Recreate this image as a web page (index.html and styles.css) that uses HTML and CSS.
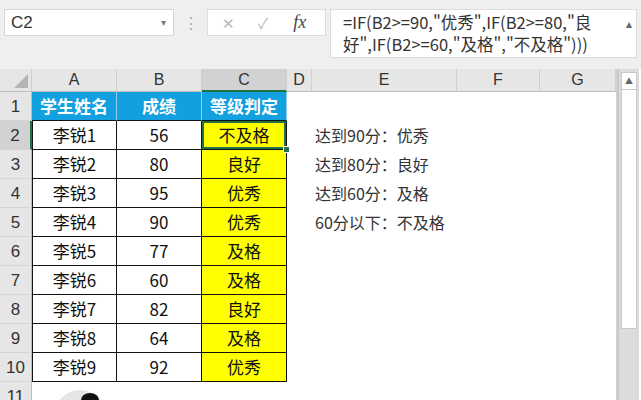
FILE: index.html
```html
<!DOCTYPE html>
<html lang="zh-CN">
<head>
<meta charset="UTF-8" />
<title>IF 函数 - 等级判定</title>
<link rel="stylesheet" href="styles.css">
</head>
<body>
<div class="toolbar">
  <div class="namebox">C2<span class="drop">▾</span></div>
  <div class="dots">⋮</div>
  <div class="fxgroup">
    <span class="btn-x">✕</span>
    <span class="btn-ok">✓</span>
    <span class="btn-fx">fx</span>
  </div>
  <div class="formula">
    =IF(B2&gt;=90,"优秀",IF(B2&gt;=80,"良<br>好",IF(B2&gt;=60,"及格","不及格")))
    <span class="collapse">▴</span>
  </div>
</div>

<div class="sheet">
  <div class="grid">
    <div class="corner"></div>
    <div class="colhead">A</div>
    <div class="colhead">B</div>
    <div class="colhead sel">C</div>
    <div class="colhead">D</div>
    <div class="colhead">E</div>
    <div class="colhead">F</div>
    <div class="colhead">G</div>

    <div class="rowhead">1</div>
    <div class="cell th first">学生姓名</div>
    <div class="cell th">成绩</div>
    <div class="cell th">等级判定</div>
    <div></div><div></div><div></div><div></div>

    <div class="rowhead sel">2</div>
    <div class="cell first">李锐1</div>
    <div class="cell">56</div>
    <div class="cell grade active">不及格</div>
    <div></div><div class="note">达到90分：优秀</div><div></div><div></div>

    <div class="rowhead">3</div>
    <div class="cell first">李锐2</div>
    <div class="cell">80</div>
    <div class="cell grade">良好</div>
    <div></div><div class="note">达到80分：良好</div><div></div><div></div>

    <div class="rowhead">4</div>
    <div class="cell first">李锐3</div>
    <div class="cell">95</div>
    <div class="cell grade">优秀</div>
    <div></div><div class="note">达到60分：及格</div><div></div><div></div>

    <div class="rowhead">5</div>
    <div class="cell first">李锐4</div>
    <div class="cell">90</div>
    <div class="cell grade">优秀</div>
    <div></div><div class="note">60分以下：不及格</div><div></div><div></div>

    <div class="rowhead">6</div>
    <div class="cell first">李锐5</div>
    <div class="cell">77</div>
    <div class="cell grade">及格</div>
    <div></div><div></div><div></div><div></div>

    <div class="rowhead">7</div>
    <div class="cell first">李锐6</div>
    <div class="cell">60</div>
    <div class="cell grade">及格</div>
    <div></div><div></div><div></div><div></div>

    <div class="rowhead">8</div>
    <div class="cell first">李锐7</div>
    <div class="cell">82</div>
    <div class="cell grade">良好</div>
    <div></div><div></div><div></div><div></div>

    <div class="rowhead">9</div>
    <div class="cell first">李锐8</div>
    <div class="cell">64</div>
    <div class="cell grade">及格</div>
    <div></div><div></div><div></div><div></div>

    <div class="rowhead">10</div>
    <div class="cell first">李锐9</div>
    <div class="cell">92</div>
    <div class="cell grade">优秀</div>
    <div></div><div></div><div></div><div></div>

    <div class="rowhead">11</div>
    <div class="pic">
      <svg width="60" height="40" viewBox="0 0 60 40">
        <circle cx="30" cy="30" r="26" fill="#e6e6e6"/>
        <ellipse cx="40" cy="14" rx="9" ry="7" fill="#111"/>
      </svg>
    </div>
    <div></div><div></div><div></div><div></div><div></div><div></div>
  </div>
  <div class="scrollbar">
    <div class="sb-up">▲</div>
    <div class="sb-thumb"></div>
  </div>
</div>
</body>
</html>
```

FILE: styles.css
```css
body {
  margin: 0;
  width: 641px;
  height: 400px;
  overflow: hidden;
  background: #efefef;
  font-family: "Noto Sans CJK SC", "Liberation Sans", sans-serif;
  color: #222;
}

.toolbar {
  display: flex;
  align-items: flex-start;
  height: 69px;
  padding: 9px 4px 0 4px;
  box-sizing: border-box;
}
.namebox {
  width: 170px;
  height: 27px;
  background: #fff;
  border: 1px solid #d6d6d6;
  box-sizing: border-box;
  font-family: "Liberation Sans", sans-serif;
  font-size: 17px;
  line-height: 25px;
  padding-left: 6px;
  color: #333;
  display: flex;
  justify-content: space-between;
}
.drop {
  font-size: 10px;
  color: #777;
  padding-right: 7px;
}
.dots {
  width: 33px;
  text-align: center;
  color: #aaa;
  font-size: 16px;
  line-height: 27px;
}
.fxgroup {
  width: 119px;
  height: 27px;
  background: #fff;
  border: 1px solid #dcdcdc;
  box-sizing: border-box;
  display: flex;
  align-items: center;
  color: #b8b8b8;
  font-size: 15px;
}
.btn-x { margin-left: 14px; }
.btn-ok { margin-left: 23px; }
.btn-fx {
  margin-left: 25px;
  font-family: "Liberation Serif", serif;
  font-style: italic;
  font-size: 18px;
  color: #444;
}
.formula {
  position: relative;
  margin-left: 4px;
  width: 307px;
  height: 49px;
  background: #fff;
  border: 1px solid #dcdcdc;
  box-sizing: border-box;
  padding: 1px 0 0 12px;
  font-size: 16.5px;
  line-height: 22px;
  color: #333;
}
.collapse {
  position: absolute;
  right: 4px;
  top: 2px;
  font-size: 12px;
  color: #666;
}

.sheet {
  display: flex;
  background: #fff;
}
.grid {
  display: grid;
  grid-template-columns: 32px 85px 85px 85px 25px 145px 83px 76px;
  grid-template-rows: 23px;
  grid-auto-rows: 29px;
  border-right: 2px solid #d0d0d0;
}
.corner {
  background: #e6e6e6;
  border-right: 1px solid #cfcfcf;
  border-bottom: 1px solid #bdbdbd;
  position: relative;
}
.corner::after {
  content: "";
  position: absolute;
  right: 3px;
  bottom: 3px;
  border-left: 14px solid transparent;
  border-bottom: 14px solid #b5b5b5;
}
.colhead {
  background: #e6e6e6;
  border-right: 1px solid #cfcfcf;
  border-bottom: 1px solid #bdbdbd;
  text-align: center;
  font-family: "Liberation Sans", sans-serif;
  font-size: 16px;
  line-height: 22px;
  color: #333;
}
.colhead.sel {
  background: #d2d2d2;
  border-bottom: 2px solid #217346;
}
.rowhead {
  background: #e6e6e6;
  border-right: 1px solid #bdbdbd;
  border-bottom: 1px solid #d4d4d4;
  text-align: center;
  font-family: "Liberation Sans", sans-serif;
  font-size: 17px;
  line-height: 29px;
  color: #333;
}
.rowhead.sel {
  background: #d2d2d2;
  border-right: 2px solid #217346;
}

.cell {
  border-right: 1px solid #111;
  border-bottom: 1px solid #111;
  text-align: center;
  font-size: 17px;
  line-height: 28px;
  color: #111;
}
.cell.first {
  border-left: 1px solid #111;
}
.cell.th {
  background: #12a0e0;
  color: #fff;
  font-weight: bold;
  border-right: 1px solid #8fcdf0;
  border-bottom: 1px solid #111;
}
.cell.th.first {
  border-left: none;
}
.cell.grade {
  background: #ffff00;
}
.cell.active {
  position: relative;
  box-shadow: inset 0 0 0 2px #217346;
}
.cell.active::after {
  content: "";
  position: absolute;
  right: -4px;
  bottom: -4px;
  width: 5px;
  height: 5px;
  background: #217346;
  border: 1px solid #fff;
}
.note {
  font-size: 16px;
  line-height: 29px;
  padding-left: 3px;
  color: #333;
  white-space: nowrap;
}
.pic {
  padding: 4px 0 0 18px;
  grid-column: span 2;
  overflow: hidden;
}

.scrollbar {
  width: 21px;
  height: 331px;
  background: #dcdcdc;
  border-left: 1px solid #c4c4c4;
  padding: 3px 2px 0 2px;
  box-sizing: border-box;
  display: flex;
  flex-direction: column;
}
.sb-up {
  height: 16px;
  background: #fff;
  border: 1px solid #c8c8c8;
  font-size: 8px;
  line-height: 15px;
  text-align: center;
  color: #666;
}
.sb-thumb {
  height: 238px;
  background: #fff;
  border: 1px solid #c8c8c8;
  border-top: none;
}
```
